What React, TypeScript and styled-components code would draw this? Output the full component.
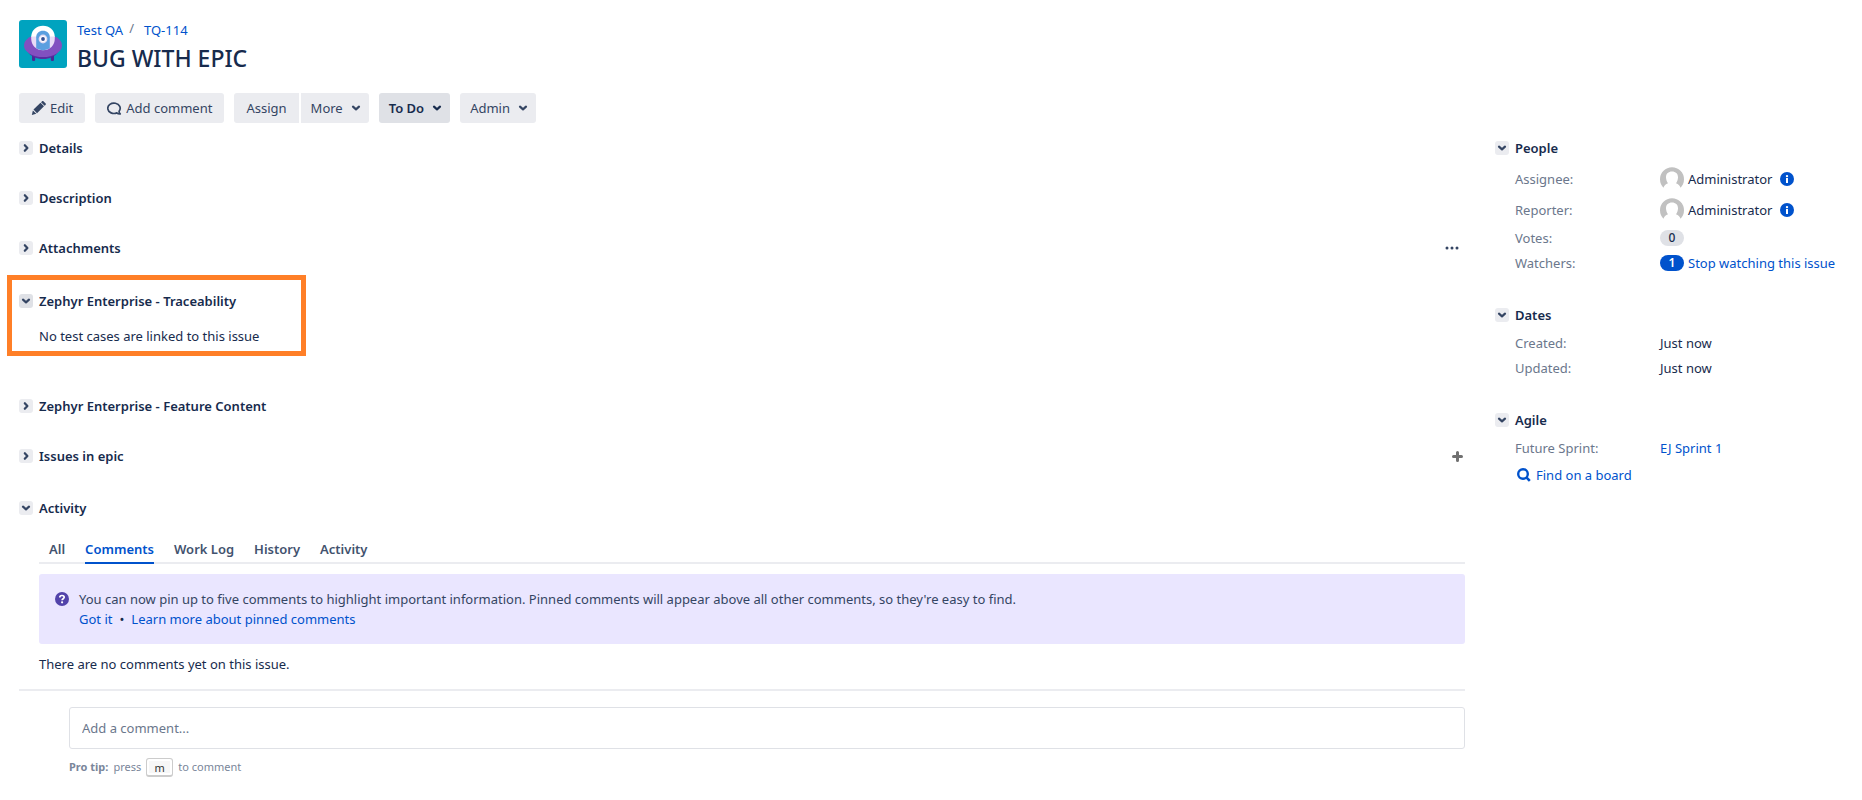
import React from 'react';
import styled, { createGlobalStyle, css } from 'styled-components';

const color = {
  text: '#172b4d',
  button: '#344563',
  label: '#6b778c',
  link: '#0052cc',
  tint: '#ebecf0',
  tintDark: '#dfe1e6',
};

const GlobalStyle = createGlobalStyle`
  *, *::before, *::after { box-sizing: border-box; }
  body {
    margin: 0;
    background: #fff;
    color: ${color.text};
    font-family: 'Noto Sans', 'Open Sans', sans-serif;
    font-size: 13px;
    line-height: 20px;
  }
  button, input { font: inherit; color: inherit; }
  a { color: ${color.link}; text-decoration: none; }
  a:hover { text-decoration: underline; }
  svg { display: block; flex: none; }
`;

const Page = styled.div`
  padding: 20px 19px 24px;
`;

const Header = styled.header`
  display: flex;
  gap: 10px;
  margin-bottom: 25px;
`;

const Breadcrumbs = styled.nav`
  display: flex;
`;

const Separator = styled.span`
  padding: 0 10px 0 6px;
  line-height: 16px;
  color: ${color.label};
`;

const Title = styled.h1`
  margin: 4px 0 0;
  font-size: 23px;
  line-height: 28px;
  height: 24px;
  font-weight: 500;
`;

const Toolbar = styled.div`
  display: flex;
  flex-wrap: wrap;
  gap: 10px;
  margin-bottom: 15px;
`;

const ButtonGroup = styled.div`
  display: flex;
  gap: 2px;
  & > button:not(:last-child) { border-radius: 3px 0 0 3px; }
  & > button + button { border-radius: 0 3px 3px 0; }
`;

const Button = styled.button<{ $menu?: boolean; $status?: boolean }>`
  display: inline-flex;
  align-items: center;
  gap: 4px;
  height: 30px;
  padding: 0 12px;
  border: 0;
  border-radius: 3px;
  background: ${color.tint};
  color: ${color.button};
  cursor: pointer;
  ${p => p.$menu && css`
    gap: 8px;
    padding: 0 8px 0 10px;
  `}
  ${p => p.$status && css`
    background: ${color.tintDark};
    color: ${color.text};
    font-weight: 600;
  `}
`;

const Columns = styled.div`
  display: grid;
  grid-template-columns: minmax(0, 1fr) 348px;
  gap: 30px;
`;

const Stack = styled.div`
  display: flex;
  flex-direction: column;
  gap: 30px;
`;

const SectionHeader = styled.div`
  display: flex;
  align-items: center;
  gap: 6px;
`;

const Toggle = styled.button<{ $dark?: boolean }>`
  display: flex;
  align-items: center;
  justify-content: center;
  width: 14px;
  height: 14px;
  padding: 0;
  border: 0;
  border-radius: 3px;
  background: ${p => (p.$dark ? color.tintDark : color.tint)};
  color: ${color.button};
  cursor: pointer;
`;

const SectionTitle = styled.h2`
  flex: 1;
  margin: 0;
  font-size: 13px;
  line-height: 20px;
  font-weight: 600;
`;

const IconButton = styled.button<{ $inset: number; $tone: string }>`
  display: flex;
  margin-right: ${p => p.$inset}px;
  padding: 0;
  border: 0;
  background: none;
  color: ${p => p.$tone};
  cursor: pointer;
`;

const Highlight = styled.div`
  width: 299px;
  margin: 17px 0 40px -12px;
  padding: 11px 7px 5px;
  border: 5px solid #ff7f27;
`;

const HighlightText = styled.p`
  margin: 15px 0 0 20px;
`;

const Activity = styled.section`
  margin-top: 32px;
`;

const ActivityBody = styled.div`
  padding: 21px 0 15px 20px;
`;

const Tabs = styled.nav`
  display: flex;
  gap: 20px;
  padding-left: 10px;
  box-shadow: inset 0 -2px ${color.tint};
`;

const Tab = styled.a<{ $active?: boolean }>`
  padding-bottom: 3px;
  border-bottom: 2px solid ${p => (p.$active ? color.link : 'transparent')};
  color: ${p => (p.$active ? color.link : '#42526e')};
  font-weight: 600;
`;

const Banner = styled.div`
  display: flex;
  gap: 10px;
  margin: 10px 0;
  padding: 15px 16px;
  border-radius: 3px;
  background: #eae6ff;
  & > svg { margin-top: 3px; }
`;

const BannerText = styled.p`
  margin: 0;
  color: ${color.button};
`;

const BannerLinks = styled.div`
  display: flex;
  gap: 7px;
`;

const Paragraph = styled.p`
  margin: 0;
`;

const CommentForm = styled.form`
  padding: 16px 0 0 50px;
  border-top: 2px solid ${color.tint};
`;

const CommentInput = styled.input`
  display: block;
  width: 100%;
  height: 42px;
  padding: 0 12px;
  border: 1px solid ${color.tintDark};
  border-radius: 3px;
  &::placeholder { color: ${color.label}; opacity: 1; }
`;

const Tip = styled.p`
  display: flex;
  align-items: center;
  gap: 5px;
  margin: 8px 0 0;
  font-size: 11px;
  color: #7a869a;
`;

const Key = styled.kbd`
  width: 27px;
  height: 19px;
  border: 1px solid #ccc;
  border-bottom-width: 2px;
  border-radius: 3px;
  background: #f7f7f7;
  box-shadow: inset 0 0 0 2px #fff;
  color: #333;
  font: 11px/18px 'Noto Sans', sans-serif;
  text-align: center;
`;

const Fields = styled.dl`
  margin: 5px 0 0 20px;
`;

const Field = styled.div<{ $tall?: boolean }>`
  display: grid;
  grid-template-columns: 145px minmax(0, 1fr);
  align-items: center;
  height: ${p => (p.$tall ? 31 : 25)}px;
`;

const Label = styled.dt`
  color: ${color.label};
`;

const Value = styled.dd`
  display: flex;
  align-items: center;
  gap: 4px;
  margin: 0;
`;

const Person = styled.span`
  margin-right: 4px;
`;

const Count = styled.span<{ $on?: boolean }>`
  width: 24px;
  height: 16px;
  border-radius: 8px;
  background: ${p => (p.$on ? color.link : color.tintDark)};
  color: ${p => (p.$on ? '#fff' : color.text)};
  font-size: 12px;
  line-height: 16px;
  font-weight: ${p => (p.$on ? 600 : 500)};
  text-align: center;
`;

const BoardLink = styled.a`
  display: flex;
  align-items: center;
  gap: 5px;
  margin: 5px 0 0 22px;
`;

const Chevron = ({ down }: { down?: boolean }) => (
  <svg width="10" height="10" viewBox="0 0 10 10" fill="none" stroke="currentColor" strokeWidth="2.2" strokeLinecap="round" strokeLinejoin="round" aria-hidden="true">
    <path d={down ? 'M2 3.7 5 6.3 8 3.7' : 'M3.8 2.2 6.4 5 3.8 7.8'} />
  </svg>
);

const ProjectAvatar = () => (
  <svg width="48" height="48" viewBox="0 0 48 48" role="img" aria-label="Test QA">
    <rect width="48" height="48" rx="3" fill="#00a3bf" />
    <path d="M13 33h3.2v6.8a1.2 1.2 0 0 1-1.2 1.2h-.8A1.2 1.2 0 0 1 13 39.800zM31.800 33H35v6.800a1.200 1.200 0 0 1-1.200 1.200H33a1.200 1.200 0 0 1-1.200-1.200z" fill="#4a2896" />
    <path d="M9 32c2.500 4.300 8.500 7 15 7s12.500-2.700 15-7z" fill="#562ea0" />
    <ellipse cx="24" cy="25.500" rx="19" ry="11.500" fill="#8250c0" />
    <path d="M12.200 16h23.600v2.400c0 6.800-4.900 11.800-11.800 11.800s-11.800-5-11.800-11.800z" fill="#e9dcf6" />
    <path d="M12.200 16.500C12.600 10 17.400 5.700 24 5.700S35.400 10 35.800 16.500z" fill="#fff" />
    <path d="M17.200 17.300c0-3.900 2.900-6.500 6.800-6.500s6.800 2.600 6.800 6.500v10.800c-2 1.300-4.300 2.100-6.800 2.100s-4.800-.8-6.800-2.100z" fill="#5b9fe0" />
    <circle cx="24" cy="19" r="4.400" fill="#e3dcf4" />
    <circle cx="24" cy="19" r="3" fill="#fff" />
    <circle cx="24" cy="19" r="1.900" fill="#344f94" />
  </svg>
);

const PencilIcon = () => (
  <svg width="15" height="16" viewBox="0 0 15 16" fill="currentColor" aria-hidden="true">
    <path d="M.8 14.900 1.900 10.400 5.300 13.800z" />
    <path d="M2.500 9.600 9.500 2.800l3.500 3.500-7 6.900z" />
    <path d="M10 2.200l.9-.8c.5-.5 1.200-.5 1.700 0l1.900 1.900c.5.500.5 1.200 0 1.700l-.9.800z" />
  </svg>
);

const CommentIcon = () => (
  <svg width="15" height="14" viewBox="0 0 15 14" fill="none" stroke="currentColor" strokeWidth="1.7" strokeLinejoin="round" aria-hidden="true">
    <path d="M9.800 11.900A6.200 5.200 0 1 1 12.100 10.200C12 11.400 12.400 12.300 13.200 13 11.700 13.100 10.600 12.700 9.800 11.900z" />
  </svg>
);

const DotsIcon = () => (
  <svg width="14" height="4" viewBox="0 0 14 4" fill="currentColor" aria-hidden="true">
    <circle cx="2" cy="2" r="1.5" />
    <circle cx="7" cy="2" r="1.5" />
    <circle cx="12" cy="2" r="1.5" />
  </svg>
);

const PlusIcon = () => (
  <svg width="11" height="11" viewBox="0 0 11 11" fill="none" stroke="currentColor" strokeWidth="3" strokeLinecap="round" aria-hidden="true">
    <path d="M5.500 1.500v8M1.500 5.500h8" />
  </svg>
);

const QuestionIcon = () => (
  <svg width="14" height="14" viewBox="0 0 14 14" fill="none" aria-hidden="true">
    <circle cx="7" cy="7" r="7" fill="#5243aa" />
    <path d="M4.800 5.500c0-1.300 1-2 2.200-2s2.200.7 2.200 1.800c0 1.400-2.100 1.400-2.100 2.900" stroke="#fff" strokeWidth="1.7" />
    <circle cx="7.100" cy="10.300" r="1.100" fill="#fff" />
  </svg>
);

const InfoIcon = () => (
  <svg width="14" height="14" viewBox="0 0 14 14" role="img" aria-label="More information">
    <circle cx="7" cy="7" r="7" fill="#0052cc" />
    <circle cx="7" cy="4.100" r="1.200" fill="#fff" />
    <rect x="6" y="6" width="2" height="5" fill="#fff" />
  </svg>
);

const UserAvatar = () => (
  <svg width="24" height="24" viewBox="0 0 24 24" aria-hidden="true">
    <path d="M3.500 20.800A12 12 0 1 1 20.500 20.800C19.900 18.400 18.300 17 16 16.200 17.200 14.500 18 12.300 18 10.200 18 6.700 15.600 4.500 12 4.500S6 6.700 6 10.200c0 2.100.8 4.300 2 6-2.300.8-3.900 2.200-4.500 4.600z" fill="#c1c1c1" />
  </svg>
);

const SearchIcon = () => (
  <svg width="14" height="14" viewBox="0 0 14 14" fill="none" stroke="currentColor" aria-hidden="true">
    <circle cx="6" cy="6" r="4.800" strokeWidth="2.4" />
    <path d="m9.600 9.600 3.200 3.200" strokeWidth="2.6" />
  </svg>
);

function Heading({ title, open, dark, children }: { title: string; open?: boolean; dark?: boolean; children?: React.ReactNode }) {
  return (
    <SectionHeader>
      <Toggle type="button" aria-label={title} aria-expanded={!!open} $dark={dark}>
        <Chevron down={open} />
      </Toggle>
      <SectionTitle>{title}</SectionTitle>
      {children}
    </SectionHeader>
  );
}

const PersonValue = ({ name }: { name: string }) => (
  <Value>
    <UserAvatar />
    <Person>{name}</Person>
    <InfoIcon />
  </Value>
);

const tabs = ['All', 'Comments', 'Work Log', 'History', 'Activity'];

export default function App() {
  return (
    <>
      <GlobalStyle />
      <Page>
        <Header>
          <ProjectAvatar />
          <div>
            <Breadcrumbs aria-label="Breadcrumbs">
              <a href="#project">Test QA</a>
              <Separator>/</Separator>
              <a href="#issue">TQ-114</a>
            </Breadcrumbs>
            <Title>BUG WITH EPIC</Title>
          </div>
        </Header>

        <Toolbar>
          <Button type="button"><PencilIcon />Edit</Button>
          <Button type="button"><CommentIcon />Add comment</Button>
          <ButtonGroup>
            <Button type="button">Assign</Button>
            <Button type="button" $menu>More<Chevron down /></Button>
          </ButtonGroup>
          <Button type="button" $menu $status>To Do<Chevron down /></Button>
          <Button type="button" $menu>Admin<Chevron down /></Button>
        </Toolbar>

        <Columns>
          <main>
            <Stack>
              <Heading title="Details" />
              <Heading title="Description" />
              <Heading title="Attachments">
                <IconButton type="button" aria-label="Attachment options" $inset={6} $tone={color.button}><DotsIcon /></IconButton>
              </Heading>
            </Stack>

            <Highlight>
              <Heading title="Zephyr Enterprise - Traceability" open dark />
              <HighlightText>No test cases are linked to this issue</HighlightText>
            </Highlight>

            <Stack>
              <Heading title="Zephyr Enterprise - Feature Content" />
              <Heading title="Issues in epic">
                <IconButton type="button" aria-label="Create issue in epic" $inset={2} $tone="#707070"><PlusIcon /></IconButton>
              </Heading>
            </Stack>

            <Activity>
              <Heading title="Activity" open />
              <ActivityBody>
                <Tabs aria-label="Activity">
                  {tabs.map(tab => (
                    <Tab key={tab} href={`#${tab}`} $active={tab === 'Comments'}>{tab}</Tab>
                  ))}
                </Tabs>
                <Banner>
                  <QuestionIcon />
                  <div>
                    <BannerText>
                      You can now pin up to five comments to highlight important information. Pinned comments will appear above all other comments, so they're easy to find.
                    </BannerText>
                    <BannerLinks>
                      <a href="#dismiss">Got it</a>
                      <span>•</span>
                      <a href="#learn-more">Learn more about pinned comments</a>
                    </BannerLinks>
                  </div>
                </Banner>
                <Paragraph>There are no comments yet on this issue.</Paragraph>
              </ActivityBody>
              <CommentForm>
                <CommentInput type="text" aria-label="Add a comment" placeholder="Add a comment..." />
                <Tip><strong>Pro tip:</strong> press <Key>m</Key> to comment</Tip>
              </CommentForm>
            </Activity>
          </main>

          <aside>
            <Stack>
              <section>
                <Heading title="People" open />
                <Fields>
                  <Field $tall><Label>Assignee:</Label><PersonValue name="Administrator" /></Field>
                  <Field $tall><Label>Reporter:</Label><PersonValue name="Administrator" /></Field>
                  <Field><Label>Votes:</Label><Value><Count>0</Count></Value></Field>
                  <Field>
                    <Label>Watchers:</Label>
                    <Value><Count $on>1</Count><a href="#watch">Stop watching this issue</a></Value>
                  </Field>
                </Fields>
              </section>
              <section>
                <Heading title="Dates" open />
                <Fields>
                  <Field><Label>Created:</Label><Value>Just now</Value></Field>
                  <Field><Label>Updated:</Label><Value>Just now</Value></Field>
                </Fields>
              </section>
              <section>
                <Heading title="Agile" open />
                <Fields>
                  <Field><Label>Future Sprint:</Label><Value><a href="#sprint">EJ Sprint 1</a></Value></Field>
                </Fields>
                <BoardLink href="#board"><SearchIcon />Find on a board</BoardLink>
              </section>
            </Stack>
          </aside>
        </Columns>
      </Page>
    </>
  );
}
